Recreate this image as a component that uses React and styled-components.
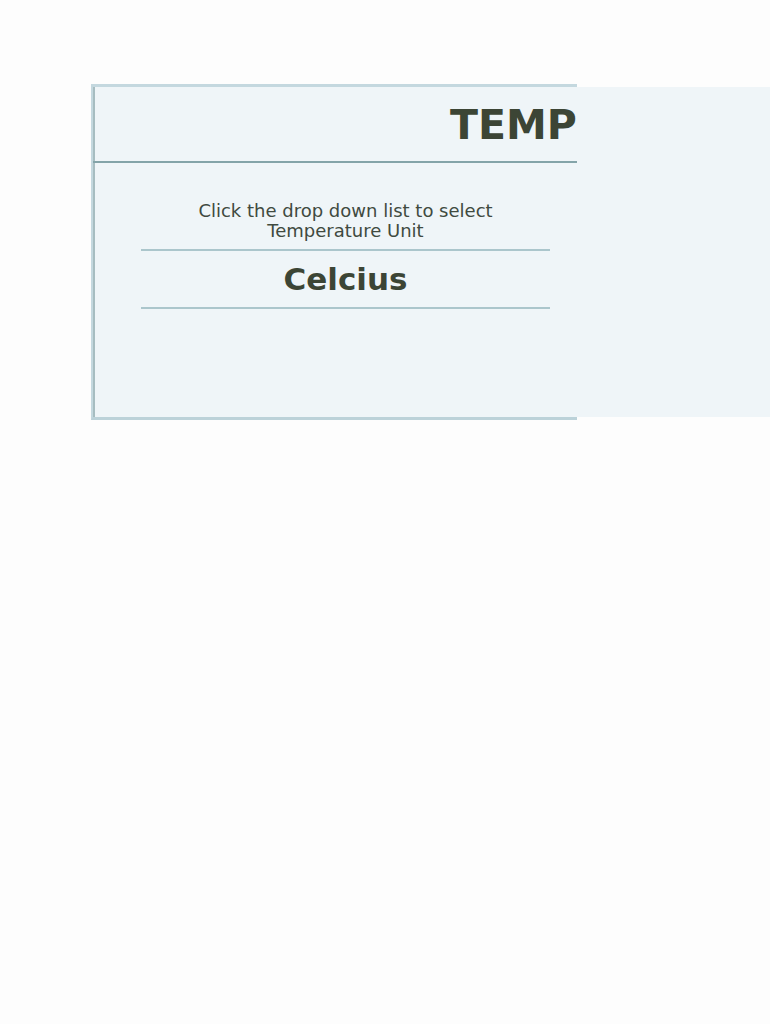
import styled, { createGlobalStyle } from 'styled-components';

const GlobalStyle = createGlobalStyle`
    body {
        margin: 0;
        background-color: #fdfdfd;
        font-family: 'DejaVu Sans', Verdana, sans-serif;
    }
`

export default function App() {
    return (
        <>
            <GlobalStyle />
            <Page>
                <Sheet>
                    <Panel>
                        <Header>
                            <Title>TEMP</Title>
                        </Header>
                        <Content>
                            <Hint>
                                Click the drop down list to select<br />
                                Temperature Unit
                            </Hint>
                            <Rule />
                            <Unit>Celcius</Unit>
                            <Rule />
                        </Content>
                    </Panel>
                    <Filler />
                </Sheet>
            </Page>
        </>
    )
}

const Page = styled.div`
    padding-top: 84px;
    padding-left: 91px;
    min-height: 1024px;
    box-sizing: border-box;
`

const Sheet = styled.div`
    display: flex;
    width: 679px;
`

const Panel = styled.div`
    width: 484px;
    height: 330px;
    background-color: #eff5f8;
    border-top: 3px solid #c4d8df;
    border-bottom: 3px solid #bcd2d9;
    border-left: 2px solid #c4d8df;
    box-shadow: inset 2px 0 0 #a7bdc1;
    display: flex;
    flex-direction: column;
`

const Header = styled.div`
    height: 76px;
    box-sizing: border-box;
    border-bottom: 2px solid #84a4a9;
    padding: 14px 0 0 357px;
    overflow: hidden;
`

const Title = styled.h1`
    margin: 0;
    font-size: 41px;
    line-height: 48px;
    font-weight: 700;
    color: #3c4535;
    white-space: nowrap;
`

const Content = styled.div`
    width: 409px;
    margin-left: 48px;
    padding-top: 38px;
    display: flex;
    flex-direction: column;
    align-items: stretch;
`

const Hint = styled.p`
    margin: 0 0 8px;
    font-size: 18px;
    line-height: 20px;
    color: #404a40;
    text-align: center;
`

const Rule = styled.div`
    height: 2px;
    background-color: #abc6cc;
`

const Unit = styled.div`
    height: 56px;
    display: flex;
    align-items: center;
    justify-content: center;
    font-size: 31px;
    font-weight: 700;
    color: #3c4535;
`

const Filler = styled.div`
    flex: 1;
    margin: 3px 0 3px;
    background-color: #eff5f8;
`
